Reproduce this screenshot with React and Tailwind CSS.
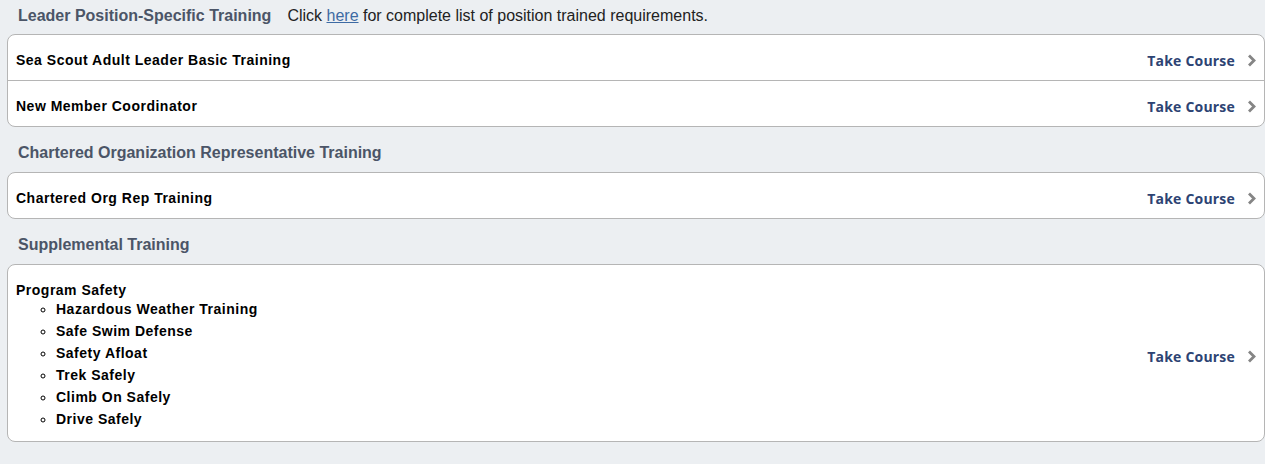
function Chevron() {
  return (
    <svg width="9" height="13" viewBox="0 0 9 13" className="text-[#858585]">
      <path d="M2 1.5 L7 6.5 L2 11.5" fill="none" stroke="currentColor" strokeWidth="2.8" />
    </svg>
  );
}

function TakeCourse() {
  return (
    <a href="#" className="flex items-center gap-[12px] text-[#2d4373] font-bold text-[14px] tracking-[0.2px] [font-family:'Open_Sans',sans-serif]">
      Take Course
      <Chevron />
    </a>
  );
}

function Row({ children, last, tall }) {
  return (
    <div className={`flex items-center justify-between ${tall ? 'min-h-[46px]' : 'min-h-[45px]'} pt-[5px] pl-[8px] pr-[8px] ${last ? '' : 'border-b border-[#b5b5b5]'}`}>
      <div className="text-[14px] font-bold text-black tracking-[0.5px]">{children}</div>
      <TakeCourse />
    </div>
  );
}

function Section({ title, extra, first, children }) {
  return (
    <div>
      <div className={`flex items-baseline ${first ? 'h-[34px]' : 'h-[35px]'} pt-[4px] pl-[18px]`}>
        <h2 className="text-[16px] font-bold text-[#4b5567]">{title}</h2>
        {extra}
      </div>
      <div className="ml-[7px] bg-white border border-[#b5b5b5] rounded-[8px]">
        {children}
      </div>
    </div>
  );
}

const safety = [
  'Hazardous Weather Training',
  'Safe Swim Defense',
  'Safety Afloat',
  'Trek Safely',
  'Climb On Safely',
  'Drive Safely',
];

export default function App() {
  return (
    <div className="min-h-[464px] w-[1265px] bg-[#eceff2] [font-family:'Liberation_Sans',Arial,sans-serif] overflow-hidden">
      <Section
        first
        title="Leader Position-Specific Training"
        extra={
          <span className="ml-[16px] text-[16px] text-[#222]">
            Click <a href="#" className="underline text-[#3d6aa3]">here</a> for complete list of position trained requirements.
          </span>
        }
      >
        <Row tall>Sea Scout Adult Leader Basic Training</Row>
        <Row last>New Member Coordinator</Row>
      </Section>

      <div className="mt-[10px]">
        <Section title="Chartered Organization Representative Training">
          <Row last>Chartered Org Rep Training</Row>
        </Section>
      </div>

      <div className="mt-[10px]">
        <Section title="Supplemental Training">
          <div className="flex items-center justify-between pl-[8px] pr-[8px] pt-[17px] pb-[11px]">
            <div className="text-[14px] font-bold text-black tracking-[0.5px]">
              <div className="leading-[16px]">Program Safety</div>
              <ul className="list-[circle] pl-[40px]">
                {safety.map((s) => (
                  <li key={s} className="leading-[22px]">{s}</li>
                ))}
              </ul>
            </div>
            <TakeCourse />
          </div>
        </Section>
      </div>
    </div>
  );
}
